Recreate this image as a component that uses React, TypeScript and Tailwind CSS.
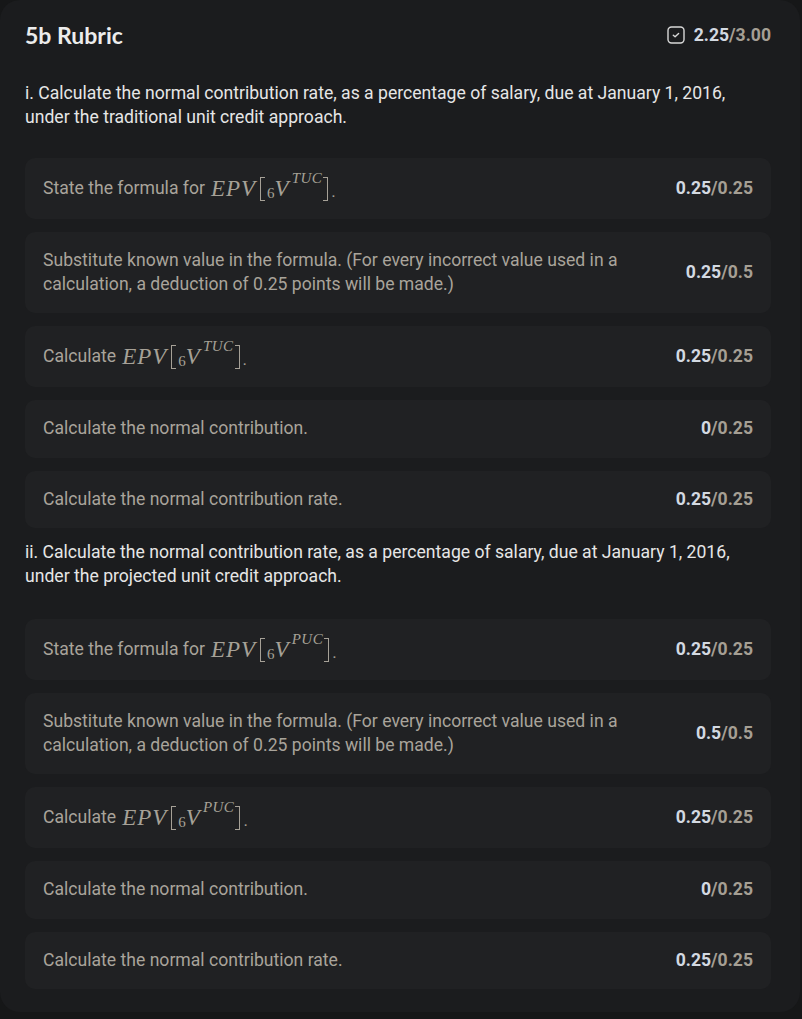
import React from "react"

type Item = { text: string; math?: "TUC" | "PUC"; pre?: string; score: string; total: string }

function Epv({ sup }: { sup: string }) {
  return (
    <span className="inline-flex items-center font-['Liberation_Serif',serif] text-[23px] leading-none ml-[6px] text-[#a6a197]">
      <span className="italic tracking-[1px]">EPV</span>
      <span className="ml-[4px] h-[24px] w-[5px] border-l border-y border-[#a6a197]" />
      <span className="ml-[2px] text-[15px] translate-y-[5px]">6</span>
      <span className="italic">V</span>
      <span className="italic text-[15px] -translate-y-[10px] ml-[3px] tracking-[0.5px]">{sup}</span>
      <span className="ml-[1px] h-[24px] w-[5px] border-r border-y border-[#a6a197]" />
      <span className="ml-[3px] self-end mb-[1px] text-[17px] font-['Roboto',sans-serif]">.</span>
    </span>
  )
}

function Row({ item }: { item: Item }) {
  return (
    <div className="flex items-center justify-between gap-6 rounded-[10px] bg-[#202123] pl-[18px] pr-[18px] py-[17px]">
      <div className="text-[17.6px] leading-[23.5px] text-[#a9a49b]">
        {item.math ? (
          <span className="inline-flex items-center h-[27px]">
            {item.pre}
            <Epv sup={item.math} />
          </span>
        ) : (
          item.text
        )}
      </div>
      <div className="shrink-0 text-[17.6px] leading-[23.5px] font-bold text-[#a59f94]">
        <span className="text-[#d3d9e1]">{item.score}</span>/{item.total}
      </div>
    </div>
  )
}

const substitute =
  "Substitute known value in the formula. (For every incorrect value used in a calculation, a deduction of 0.25 points will be made.)"

const partI: Item[] = [
  { text: "", pre: "State the formula for", math: "TUC", score: "0.25", total: "0.25" },
  { text: substitute, score: "0.25", total: "0.5" },
  { text: "", pre: "Calculate", math: "TUC", score: "0.25", total: "0.25" },
  { text: "Calculate the normal contribution.", score: "0", total: "0.25" },
  { text: "Calculate the normal contribution rate.", score: "0.25", total: "0.25" },
]

const partII: Item[] = [
  { text: "", pre: "State the formula for", math: "PUC", score: "0.25", total: "0.25" },
  { text: substitute, score: "0.5", total: "0.5" },
  { text: "", pre: "Calculate", math: "PUC", score: "0.25", total: "0.25" },
  { text: "Calculate the normal contribution.", score: "0", total: "0.25" },
  { text: "Calculate the normal contribution rate.", score: "0.25", total: "0.25" },
]

export default function App() {
  return (
    <div className="min-h-screen bg-[#161718] font-['Roboto',sans-serif]">
      <div className="w-[800px] rounded-[20px] bg-[#1b1c1e] pl-[25px] pr-[29px] pt-[22px] pb-[23px]">
        <div className="flex h-[26px] items-center justify-between">
          <h2 className="font-['Lato',sans-serif] text-[23px] font-bold text-[#ececec]">5b Rubric</h2>
          <div className="flex items-center gap-[9px]">
            <svg width="18" height="18" viewBox="0 0 18 18" fill="none">
              <rect x="1" y="1" width="16" height="16" rx="3.5" stroke="#d8d8d8" strokeWidth="1.4" />
              <path d="M6.3 9.2 L8.1 10.8 L11.6 7.4" stroke="#d8d8d8" strokeWidth="1.4" strokeLinecap="round" strokeLinejoin="round" />
            </svg>
            <span className="text-[17.6px] font-bold text-[#a59f94]">
              <span className="text-[#d3d9e1]">2.25</span>/3.00
            </span>
          </div>
        </div>

        <p className="mt-[34px] text-[17.6px] leading-[23.5px] text-[#e6e6e6]">
          i. Calculate the normal contribution rate, as a percentage of salary, due at January 1, 2016, under the
          traditional unit credit approach.
        </p>

        <div className="mt-[29px] flex flex-col gap-[13px]">
          {partI.map((it, i) => (
            <Row key={i} item={it} />
          ))}
        </div>

        <p className="mt-[13px] text-[17.6px] leading-[23.5px] text-[#e6e6e6]">
          ii. Calculate the normal contribution rate, as a percentage of salary, due at January 1, 2016, under the
          projected unit credit approach.
        </p>

        <div className="mt-[31px] flex flex-col gap-[13px]">
          {partII.map((it, i) => (
            <Row key={i} item={it} />
          ))}
        </div>
      </div>
    </div>
  )
}
